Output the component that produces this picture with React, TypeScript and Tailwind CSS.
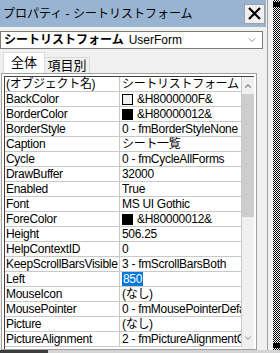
import { ChevronDown, ChevronUp } from "lucide-react";

const font = { fontFamily: '"Liberation Sans", "Noto Sans CJK JP", sans-serif' };

interface Row {
  name: string;
  value: string;
  swatch?: string;
  selected?: boolean;
}

const rows: Row[] = [
  { name: "(オブジェクト名)", value: "シートリストフォーム" },
  { name: "BackColor", value: "&H8000000F&", swatch: "#f0f0f0" },
  { name: "BorderColor", value: "&H80000012&", swatch: "#000000" },
  { name: "BorderStyle", value: "0 - fmBorderStyleNone" },
  { name: "Caption", value: "シート一覧" },
  { name: "Cycle", value: "0 - fmCycleAllForms" },
  { name: "DrawBuffer", value: "32000" },
  { name: "Enabled", value: "True" },
  { name: "Font", value: "MS UI Gothic" },
  { name: "ForeColor", value: "&H80000012&", swatch: "#000000" },
  { name: "Height", value: "506.25" },
  { name: "HelpContextID", value: "0" },
  { name: "KeepScrollBarsVisible", value: "3 - fmScrollBarsBoth" },
  { name: "Left", value: "850", selected: true },
  { name: "MouseIcon", value: "(なし)" },
  { name: "MousePointer", value: "0 - fmMousePointerDefault" },
  { name: "Picture", value: "(なし)" },
  { name: "PictureAlignment", value: "2 - fmPictureAlignmentCenter" },
];

const PropRow = ({ row }: { row: Row }) => (
  <div className="flex h-[15px] border-b border-[#c8c8c8] text-[12px] leading-[14px] tracking-[-0.3px] text-black">
    <div className="w-[115px] shrink-0 overflow-hidden whitespace-nowrap border-r border-[#c8c8c8] pl-[1px]">
      {row.name}
    </div>
    <div className="flex min-w-0 flex-1 items-center overflow-hidden whitespace-nowrap border-r border-[#c8c8c8] pl-[2px]">
      {row.swatch && (
        <span
          className="mr-[4px] inline-block h-[11px] w-[11px] shrink-0 border border-black"
          style={{ backgroundColor: row.swatch }}
        />
      )}
      {row.selected ? (
        <span className="bg-[#0078d7] px-[1px] text-white">{row.value}</span>
      ) : (
        <span>{row.value}</span>
      )}
    </div>
  </div>
);

export default function App() {
  return (
    <div className="flex h-[353px] w-[280px] flex-col overflow-hidden bg-[#f0f0f0]" style={font}>
      <div className="flex min-h-0 flex-1">
        <div className="flex w-[266px] shrink-0 flex-col overflow-hidden">
          {/* title bar */}
          <div className="flex h-[27px] items-center justify-between bg-[#99b4d1] pl-[3px] pr-[1px]">
            <span className="text-[12px] text-black">プロパティ - シートリストフォーム</span>
            <button className="flex h-[20px] w-[21px] items-center justify-center border border-[#a0a0a0] bg-[#f0f0f0]">
              <svg width="13" height="13" viewBox="0 0 13 13">
                <path d="M1 1 L12 12 M12 1 L1 12" stroke="#000" strokeWidth="2.2" />
              </svg>
            </button>
          </div>

          {/* object select */}
          <div className="mt-[4px] mr-[3px] flex h-[18px] items-center border border-[#7a7a7a] bg-white pl-[3px] pr-[4px] text-[12px]">
            <span className="font-bold">シートリストフォーム</span>
            <span className="ml-[5px]">UserForm</span>
            <ChevronDown className="ml-auto text-[#707070]" size={12} strokeWidth={1.5} />
          </div>

          {/* tabs */}
          <div className="mt-[3px] flex h-[21px] items-end pl-[3px] text-[13px]">
            <div className="flex h-[21px] w-[42px] items-center justify-center border border-b-0 border-[#d9d9d9] bg-white">
              全体
            </div>
            <div className="flex h-[16px] w-[45px] items-center justify-center border border-b-0 border-l-0 border-[#d9d9d9] bg-[#f0f0f0]">
              項目別
            </div>
          </div>

          {/* grid */}
          <div className="ml-[1px] mr-[9px] flex min-w-0 flex-1 border border-[#a0a0a0] bg-white p-[2px] pb-0">
            <div className="flex min-w-0 flex-1 border-l border-t border-[#404040]">
              <div className="min-w-0 flex-1 overflow-hidden">
                {rows.map((row) => (
                  <PropRow key={row.name} row={row} />
                ))}
              </div>
              <div className="flex w-[12px] shrink-0 flex-col items-center bg-[#f0f0f0]">
                <ChevronUp className="mt-[4px] text-[#606060]" size={10} strokeWidth={2.5} />
                <div className="mt-[3px] h-[123px] w-[12px] bg-[#cdcdcd]" />
                <ChevronDown className="mt-auto mb-[6px] text-[#a0a0a0]" size={10} strokeWidth={2.5} />
              </div>
            </div>
          </div>
        </div>

        {/* splitter */}
        <div className="ml-[1px] w-[1px] bg-[#a0a0a0]" />
        <div className="w-[5px]" />
        <div className="flex w-[7px] flex-col justify-between bg-[repeating-conic-gradient(#000_0_25%,#fff_0_50%)] bg-[length:2px_2px] py-[2px]">
          <div className="h-[5px] bg-black" />
          <div className="h-[5px] bg-black" />
        </div>
      </div>

      {/* bottom edge */}
      <div className="flex h-[3px]">
        <div className="w-[48px] bg-[#3c3c3c]" />
        <div className="flex-1 bg-[#d4d4d4]" />
      </div>
    </div>
  );
}
